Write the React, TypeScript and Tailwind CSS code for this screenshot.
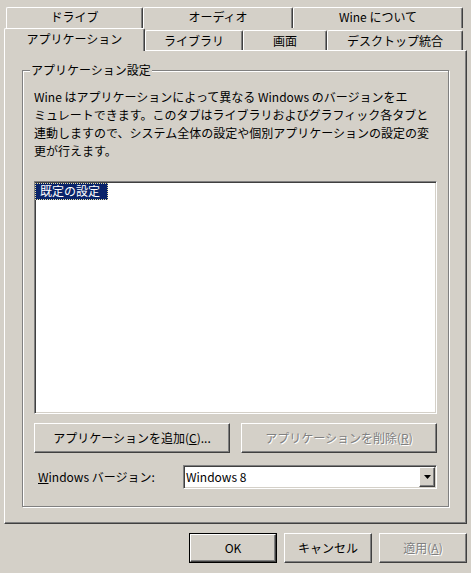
import React from 'react';

const FONT = '"Noto Sans CJK JP", "Liberation Sans", sans-serif';

// classic 3D edges
const raised =
  'border-t border-l border-white border-r border-b border-r-[#404040] border-b-[#404040] shadow-[inset_-1px_-1px_0_#808080]';
const sunken =
  'border-t border-l border-[#808080] border-r border-b border-r-white border-b-white shadow-[inset_1px_1px_0_#404040,inset_-1px_-1px_0_#d4d0c8]';

const Tab = ({
  label,
  width,
  className = '',
}: {
  label: string;
  width: number;
  className?: string;
}) => (
  <div
    className={`flex items-center justify-center bg-[#d4d0c8] border-t border-l border-white border-r border-r-[#404040] shadow-[inset_-1px_0_0_#808080] rounded-tl-[2px] rounded-tr-[2px] ${className}`}
    style={{ width }}
  >
    {label}
  </div>
);

const Button = ({
  children,
  width,
  disabled = false,
  isDefault = false,
}: {
  children: React.ReactNode;
  width: number;
  disabled?: boolean;
  isDefault?: boolean;
}) => {
  const inner = (
    <div
      className={`flex h-full w-full items-center justify-center bg-[#d4d0c8] ${raised} ${
        disabled ? 'text-[#808080] [text-shadow:1px_1px_0_#fff]' : 'text-black'
      }`}
    >
      {children}
    </div>
  );
  if (isDefault) {
    return (
      <div className="h-[30px] border border-black" style={{ width }}>
        {inner}
      </div>
    );
  }
  return (
    <div className="h-[30px]" style={{ width }}>
      {inner}
    </div>
  );
};

export default function App() {
  return (
    <div
      className="w-[471px] h-[573px] bg-[#d4d0c8] text-[12px] text-black overflow-hidden"
      style={{ fontFamily: FONT }}
    >
      {/* tab strip */}
      <div className="pt-[7px]">
        <div className="flex h-[21px] pl-[6px]">
          <Tab label="ドライブ" width={137} className="h-[21px] pb-[2px]" />
          <Tab label="オーディオ" width={150} className="h-[21px] pb-[2px]" />
          <Tab label="Wine について" width={170} className="h-[21px] pb-[2px]" />
        </div>
        <div className="flex items-end h-[22px] pl-[4px]">
          <Tab
            label="アプリケーション"
            width={141}
            className="relative z-10 h-[23px] -mb-px pb-[3px]"
          />
          <Tab label="ライブラリ" width={98} className="h-[20px]" />
          <Tab label="画面" width={84} className="h-[20px]" />
          <Tab label="デスクトップ統合" width={136} className="h-[20px]" />
        </div>
      </div>

      {/* property page */}
      <div className={`mx-[4px] h-[474px] pl-[17px] pt-[19px] ${raised}`}>
        <div className="relative w-[427px] h-[437px] border border-[#808080] shadow-[inset_1px_1px_0_#fff,1px_1px_0_#fff] px-[11px] pt-[17px]">
          <span className="absolute left-[7px] -top-[10px] bg-[#d4d0c8] px-[1px] leading-[18px]">
            アプリケーション設定
          </span>

          <p className="leading-[18px] whitespace-nowrap">
            Wine はアプリケーションによって異なる Windows のバージョンをエ
            <br />
            ミュレートできます。このタブはライブラリおよびグラフィック各タブと
            <br />
            連動しますので、システム全体の設定や個別アプリケーションの設定の変
            <br />
            更が行えます。
          </p>

          {/* application list */}
          <div className={`mt-[21px] h-[233px] bg-white pl-[0px] pt-[0px] ${sunken}`}>
            <span className="inline-block h-[17px] leading-[16px] pl-[5px] pr-[8px] bg-[#0a246a] text-white outline outline-1 outline-dotted outline-[#e8e0a0] -outline-offset-1">
              既定の設定
            </span>
          </div>

          <div className="mt-[9px] flex justify-between">
            <Button width={196}>
              アプリケーションを追加(<span className="underline">C</span>)...
            </Button>
            <Button width={196} disabled>
              アプリケーションを削除(<span className="underline">R</span>)
            </Button>
          </div>

          <div className="mt-[12px] flex items-center h-[24px]">
            <span className="pl-[4px]">
              <span className="underline">W</span>indows バージョン:
            </span>
            <div className={`ml-auto w-[254px] h-[24px] bg-white flex items-stretch ${sunken}`}>
              <span className="flex-1 pl-[2px] pt-[1px] leading-[20px]">Windows 8</span>
              <div className={`w-[16px] my-[1px] mr-[1px] flex items-center justify-center bg-[#d4d0c8] ${raised}`}>
                <svg width="7" height="4" viewBox="0 0 7 4">
                  <path d="M0 0h7L3.5 4z" fill="#000" />
                </svg>
              </div>
            </div>
          </div>
        </div>
      </div>

      {/* dialog buttons */}
      <div className="mt-[9px] flex justify-end gap-[7px] pr-[4px]">
        <Button width={88} isDefault>
          OK
        </Button>
        <Button width={88}>キャンセル</Button>
        <Button width={88} disabled>
          適用(<span className="underline">A</span>)
        </Button>
      </div>
    </div>
  );
}
